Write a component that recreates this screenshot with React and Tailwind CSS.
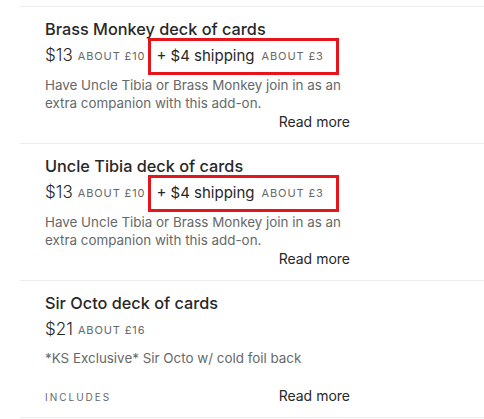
import React from "react"

const items = [
  {
    title: "Brass Monkey deck of cards",
    price: "$13",
    about: "About £10",
    shipping: true,
    desc: "Have Uncle Tibia or Brass Monkey join in as an extra companion with this add-on.",
  },
  {
    title: "Uncle Tibia deck of cards",
    price: "$13",
    about: "About £10",
    shipping: true,
    desc: "Have Uncle Tibia or Brass Monkey join in as an extra companion with this add-on.",
  },
  {
    title: "Sir Octo deck of cards",
    price: "$21",
    about: "About £16",
    shipping: false,
    desc: "*KS Exclusive* Sir Octo w/ cold foil back",
    includes: true,
  },
]

function AddOn({ item }) {
  return (
    <div className="ml-[20px] border-t border-[#ececec] pl-[25px] pt-[10px] pb-[13px]">
      <div className="w-[305px]">
        <h3 className="text-[16.3px] leading-[24px] font-medium text-[#282828] whitespace-nowrap">{item.title}</h3>
        <div className="mt-[2px] h-[26px] flex items-center whitespace-nowrap">
          <span className="text-[17px] font-light text-[#282828]">{item.price}</span>
          <span className="ml-[5px] text-[11px] uppercase tracking-[0.08em] text-[#656969]">{item.about}</span>
          {item.shipping && (
            <span className="ml-[3px] -my-[6px] h-[37px] flex items-center border-[3px] border-[#e4161b] pl-[5px] pr-[12px]">
              <span className="text-[15px] text-[#282828]">+ $4 shipping</span>
              <span className="ml-[7px] text-[11px] uppercase tracking-[0.08em] text-[#656969]">About £3</span>
            </span>
          )}
        </div>
        <p className={`${item.includes ? "mt-[6px]" : "mt-[7px]"} text-[13.4px] leading-[18px] text-[#656969]`}>{item.desc}</p>
        {item.includes ? (
          <div className="mt-[19px] h-[18px] flex items-center justify-between">
            <span className="mt-[5px] text-[10px] uppercase tracking-[0.2em] text-[#656969]">Includes</span>
            <span className="text-[14px] text-[#282828]">Read more</span>
          </div>
        ) : (
          <div className="h-[18px] flex items-center justify-end">
            <span className="text-[14px] text-[#282828]">Read more</span>
          </div>
        )}
      </div>
    </div>
  )
}

export default function App() {
  return (
    <div className="w-[484px] h-[419px] bg-white overflow-hidden pt-[6px]" style={{ fontFamily: "Inter, 'Liberation Sans', sans-serif" }}>
      {items.map((item, i) => (
        <AddOn key={i} item={item} />
      ))}
      <div className="ml-[20px] border-t border-[#ececec]" />
    </div>
  )
}
